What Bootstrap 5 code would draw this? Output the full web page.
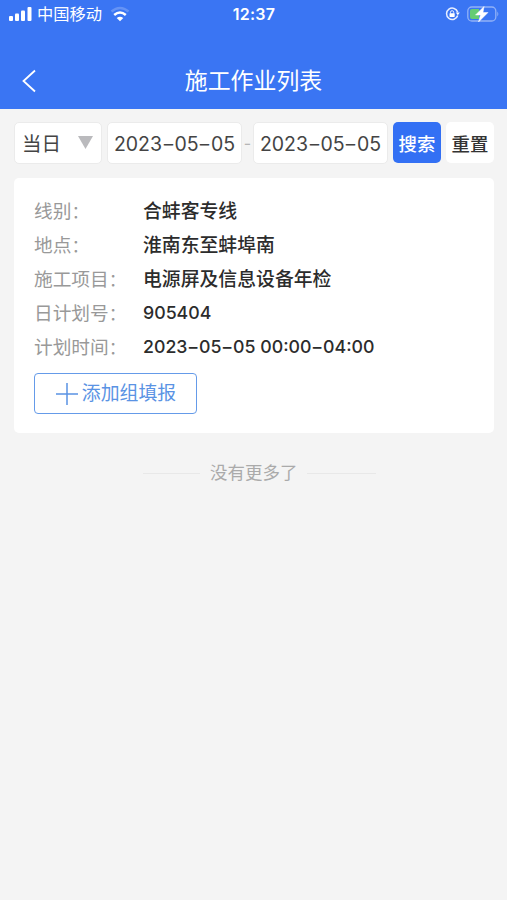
<!DOCTYPE html>
<html lang="zh-CN">
<head>
<meta charset="utf-8">
<meta name="viewport" content="width=device-width, initial-scale=1">
<title>施工作业列表</title>
<link href="https://cdn.jsdelivr.net/npm/bootstrap@5.3.0/dist/css/bootstrap.min.css" rel="stylesheet">
<style>
body{background:#f4f4f4;font-family:Inter,"Noto Sans CJK SC",sans-serif;color:#333;min-height:900px;overflow-x:hidden}
.app-header{background:#3a75f3;height:109px}
.status-bar{height:28px;padding:0 8px 0 9px;display:grid;grid-template-columns:1fr auto 1fr}
.carrier{font-size:16.3px;line-height:28px;margin-left:5px;margin-right:8px}
.clock{font-size:16px;line-height:28px;font-weight:600;letter-spacing:.25px}
.lock-icon{margin-right:6px}
.title-bar{height:50px;margin-top:28px;padding:0 22px;display:grid;grid-template-columns:1fr auto 1fr}
.title-bar h1{font-size:22.9px;line-height:50px;font-weight:400}
.filters{padding:13px 13px 0 14px;height:69px}
.field{height:42px;border:1px solid #ebebeb;border-radius:5px;background:#fff;font-size:19.5px;line-height:43px;white-space:nowrap;color:#444}
.day-field{width:88px;padding:3px 8px 0 7px;margin-right:5px}
.date-field{width:135px;text-align:center}
.hy{display:inline-block;transform:scaleX(1.5);margin:0 1.7px}
.range-dash{width:11px;line-height:42px;text-align:center;color:#b5b5b5;font-size:16px}
.action{height:41px;width:48px;padding:2px 0 0;border:0;border-radius:5px;font-size:18.4px;font-weight:500;line-height:41px;white-space:nowrap}
.action-search{background:#3370f4;color:#fff;margin-left:5px;margin-right:5px}
.action-reset{background:#fff;color:#333}
.plan-card{margin:0 13px 0 14px;height:255px;padding:17px 20px 0;border:0;border-radius:5px}
.plan-row{height:34px;line-height:34px;font-size:18.7px;white-space:nowrap}
.plan-row dt{width:109px;color:#999;font-weight:400;line-height:30px;font-family:"Noto Sans CJK SC",sans-serif}
.plan-row dt span{font-size:16.5px;margin-left:.3px}
.plan-row dd{margin:0;font-weight:500;font-size:18.85px;color:#2c2c2c}
.plan-row .digits{font-size:17.75px;line-height:32px}
.add-btn{width:163px;height:41px;margin-top:8px;padding:0 0 0 1px;border:1.5px solid #659be9;border-radius:4px;color:#5a93e4;background:#fff;font-size:18.9px;line-height:36px}
.no-more{margin-top:28px;margin-left:143px;height:24px;line-height:24px;font-size:17.5px;color:#aaa}
.no-more i{width:57px;height:1px;background:#e8e8e8}
.no-more i:last-child{width:69px}
.no-more span{margin:0 9px 0 10px}
</style>
<script src="https://cdn.jsdelivr.net/npm/bootstrap@5.3.0/dist/js/bootstrap.bundle.min.js" defer></script>
</head>
<body>
<header class="app-header text-white">
  <div class="status-bar align-items-center">
    <div class="d-flex align-items-center">
      <svg width="23" height="16" viewBox="0 0 23 16" fill="#fff"><rect x="0" y="10" width="4" height="5" rx="1"/><rect x="6" y="7.5" width="4" height="7.500" rx="1"/><rect x="12" y="4.500" width="4" height="10.500" rx="1"/><rect x="18.500" y="1" width="4" height="14" rx="1"/></svg>
      <span class="carrier">中国移动</span>
      <svg width="20" height="16" viewBox="0 0 20 16" fill="none" stroke="#fff" stroke-width="2.500"><path d="M1.500 5.500Q10-1.500 18.500 5.500" opacity=".22"/><path d="M4.200 9Q10 4 15.800 9"/><path d="M6.700 12Q10 9.300 13.300 12L10 15.300Z" fill="#fff" stroke="none"/></svg>
    </div>
    <span class="clock">12:37</span>
    <div class="d-flex align-items-center justify-content-end">
      <svg class="lock-icon" width="15" height="16" viewBox="0 0 15 16" fill="none" stroke="#e6eeff" stroke-width="1.500"><path d="M12.700 9.500A5.700 5.700 0 1 1 12.700 6.200"/><path d="M10.800 6.500h4l-2 2.800Z" fill="#fff" stroke="none"/><path d="M5.500 7.500V6.300a1.600 1.600 0 0 1 3.200 0v1.200" stroke-width="1"/><rect x="4.500" y="7.200" width="5.200" height="3.700" rx=".6" fill="#fff" stroke="none"/></svg>
      <svg width="33" height="18" viewBox="0 0 33 18"><rect x="1.800" y="2" width="28" height="14" rx="4" fill="none" stroke="#91b1f7" stroke-width="1.300"/><path d="M6 4h7v10H6a2 2 0 0 1-2-2V6a2 2 0 0 1 2-2Z" fill="#65cc75"/><path d="M31.300 6.500q2 2.500 0 5Z" fill="#91b1f7"/><path d="M18 1.500 9.500 10h5l-2 7 9.500-9.500h-5Z" fill="#fff" stroke="#fff" stroke-width=".5"/></svg>
    </div>
  </div>
  <div class="title-bar align-items-center">
    <svg width="15" height="24" viewBox="0 0 15 24" fill="none" stroke="#fff" stroke-width="1.800"><path d="M13 1.500 1.500 12 13 22.500"/></svg>
    <h1 class="mb-0">施工作业列表</h1>
  </div>
</header>
<main>
  <form class="filters d-flex align-items-start">
    <div class="field day-field d-flex align-items-center justify-content-between"><span>当日</span><svg class="mb-1" width="15" height="13" viewBox="0 0 15 13"><path d="M0 0h15L7.500 13Z" fill="#bababd"/></svg></div>
    <div class="field date-field">2023<span class="hy">-</span>05<span class="hy">-</span>05</div>
    <span class="range-dash">-</span>
    <div class="field date-field">2023<span class="hy">-</span>05<span class="hy">-</span>05</div>
    <button type="button" class="btn action action-search">搜索</button>
    <button type="button" class="btn action action-reset">重置</button>
  </form>
  <section class="card plan-card">
    <dl class="mb-0">
      <div class="plan-row d-flex"><dt>线别<span>：</span></dt><dd>合蚌客专线</dd></div>
      <div class="plan-row d-flex"><dt>地点<span>：</span></dt><dd>淮南东至蚌埠南</dd></div>
      <div class="plan-row d-flex"><dt>施工项目<span>：</span></dt><dd>电源屏及信息设备年检</dd></div>
      <div class="plan-row d-flex"><dt>日计划号<span>：</span></dt><dd class="digits">905404</dd></div>
      <div class="plan-row d-flex"><dt>计划时间<span>：</span></dt><dd class="digits">2023<span class="hy">-</span>05<span class="hy">-</span>05 00:00<span class="hy">-</span>04:00</dd></div>
    </dl>
    <button type="button" class="btn add-btn d-flex align-items-center justify-content-center"><svg class="me-1" width="22" height="22" viewBox="0 0 22 22" stroke="#5a93e4" stroke-width="1.500"><path d="M0 11h22M11 0v22"/></svg>添加组填报</button>
  </section>
  <div class="no-more d-flex align-items-center"><i></i><span>没有更多了</span><i></i></div>
</main>
</body>
</html>
